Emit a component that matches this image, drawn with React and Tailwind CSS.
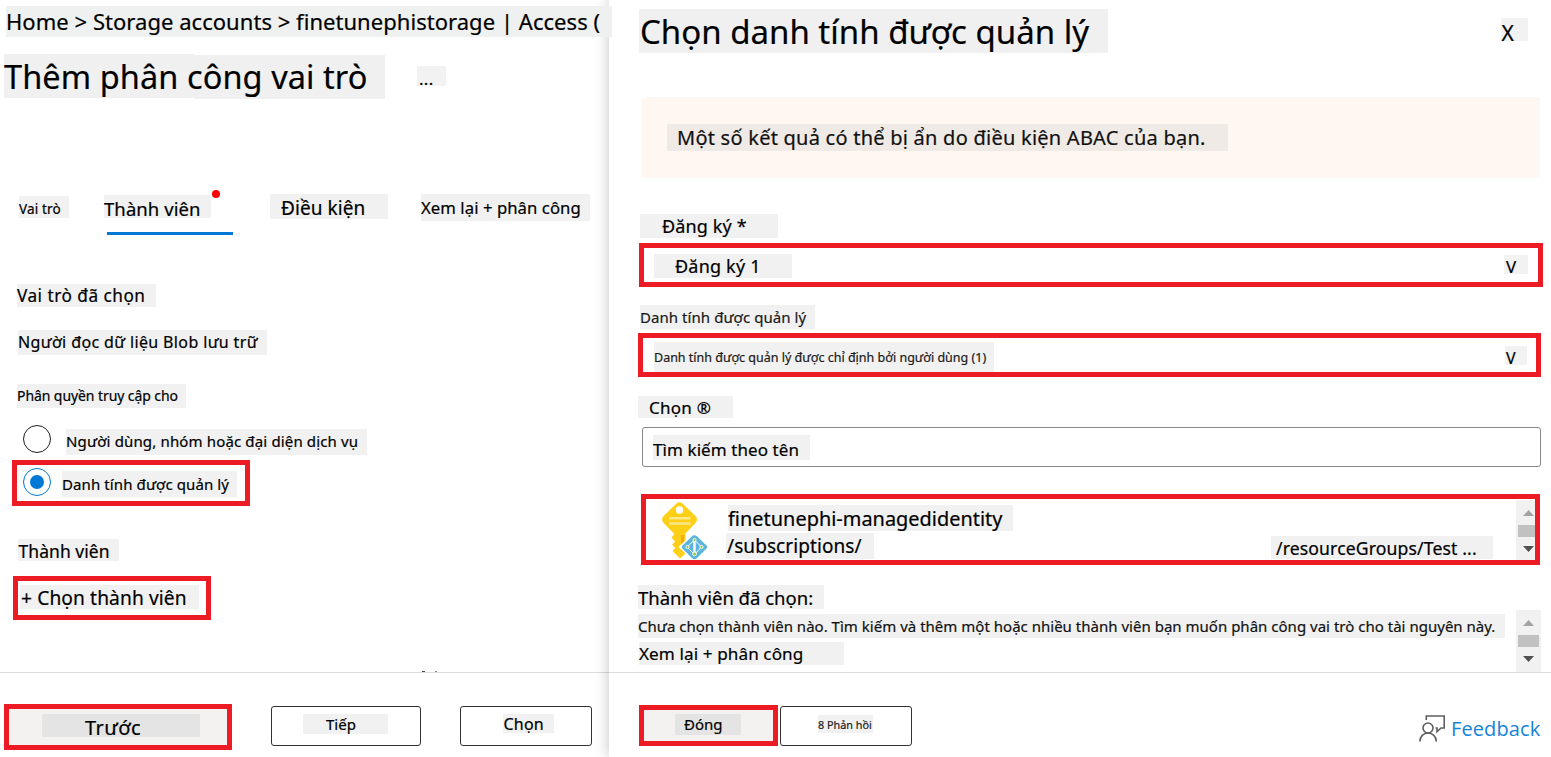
import React from "react";
import clsx from "clsx";

function Chip({ className, children }) {
  return <div className={clsx("shrink-0 whitespace-pre", className)}>{children}</div>;
}

function KeyIcon() {
  return (
    <svg className="ml-[15px] mt-[2px] h-[59px] w-[48px] shrink-0" viewBox="0 0 48 59">
      <path
        d="M15.500 2.500 Q18.500 0 21.500 2.500 L34.500 15 Q37.500 18.500 34.500 22 L24.500 32.500 V52.500 L19 57.500 L11.500 50 L14.100 47 L11.100 43.500 L14.100 40.500 L10.500 36.500 L13 33.500 V32.500 L2.500 22 Q-0.500 18.500 2.500 15 Z"
        fill="#fdd017"
      />
      <path d="M20 34 H23 V48 L20 51 Z" fill="#fba919" />
      <circle cx="18.500" cy="9" r="3.800" fill="#fff" />
      <path d="M8 17.200 H29.500 M8 22.500 H29.500" stroke="#fee68a" strokeWidth="2.400" />
      <path d="M33.500 31 L49 46 L33.500 61 L17.500 46 Z" fill="#fff" />
      <path
        d="M31 35.300 Q33.500 33 36 35.300 L45.500 44.400 Q47 46 45.500 47.600 L36 57 Q33.500 59.500 31 57 L21.500 47.600 Q20 46 21.500 44.400 Z"
        fill="#5bb4dc"
      />
      <path d="M33.500 39 L26 46 L33.500 53.500 L40.500 46 Z" fill="none" stroke="#fff" strokeWidth="1" />
      <path d="M33.500 39 V53.500" stroke="#fff" strokeWidth="2.400" />
      <g fill="#8cc63f" stroke="#fff" strokeWidth="0.900">
        <circle cx="33.500" cy="39" r="1.600" />
        <circle cx="26.500" cy="46" r="1.600" />
        <circle cx="40.500" cy="46" r="1.600" />
        <circle cx="33.500" cy="53" r="1.900" />
      </g>
    </svg>
  );
}

function FeedbackIcon() {
  return (
    <svg className="h-[28px] w-[28px] shrink-0" viewBox="0 0 28 28" fill="none" stroke="#5f5f5f" strokeWidth="1.600">
      <path d="M7.300 5 V1 H25.200 V13 H22 L18 16.600 V13 H16.500" />
      <circle cx="9" cy="13" r="5" />
      <path d="M0.900 26.500 C0.900 21.500 4.500 18 9 18 C13.500 18 17.300 21.500 17.300 26.500" />
    </svg>
  );
}

function Arrow({ up, className }) {
  return (
    <svg className={clsx("block h-[6px] w-[11px] shrink-0", className)} viewBox="0 0 11 6">
      <path d={up ? "M0 6 L5.500 0 L11 6 Z" : "M0 0 L5.500 6 L11 0 Z"} fill={up ? "#a3a3a3" : "#505050"} />
    </svg>
  );
}

function LeftPane() {
  return (
    <section className="flex h-[757px] w-[609px] shrink-0 flex-col">
      <div className="flex h-[672px] flex-col items-start overflow-visible">
        <Chip className="relative z-20 ml-[6px] mt-[6px] h-[31px] w-[606px] bg-[#eff1f0] text-[22px] leading-[31px] tracking-[0.04px]">
          Home &gt; Storage accounts &gt; finetunephistorage | Access (
        </Chip>
        <div className="mt-[17px] flex h-[45px]">
          <Chip className="ml-[4px] h-[44px] w-[190px] bg-[#f0f0f0] text-[32.5px] leading-[45px] tracking-[0.08px]">Thêm phân công vai trò</Chip>
          <span className="-z-10 mt-[1px] h-[44px] w-[191px] bg-[#f0f0f0]" />
          <Chip className="ml-[32px] mt-[12px] h-[20px] w-[29px] bg-[#f2f2f2] pl-[2px] text-[17px] leading-[25px] tracking-[0.3px]">...</Chip>
        </div>
        <div className="mt-[91px] flex h-[45px] items-start">
          <Chip className="ml-[19px] mt-[6px] h-[22px] w-[50px] bg-[#f1f1f1] text-[13.5px] leading-[26px] tracking-[0.15px]">Vai trò</Chip>
          <div className="ml-[35px] flex w-[130px] flex-col">
            <div className="flex">
              <Chip className="mt-[5px] h-[23px] w-[107px] bg-[#f1f1f1] text-[18.5px] leading-[27px] tracking-[0.08px]">Thành viên</Chip>
              <span className="ml-[1px] h-[8px] w-[8px] rounded-full bg-[#fb0007]" />
            </div>
            <span className="ml-[3px] mt-[14px] h-[3px] w-[126px] bg-[#0078d4]" />
          </div>
          <Chip className="ml-[36px] mt-[4px] h-[25px] w-[118px] bg-[#f1f1f1] pl-[11px] text-[19px] leading-[28px] tracking-[0.08px]">Điều kiện</Chip>
          <Chip className="ml-[33px] mt-[4px] h-[27px] w-[169px] bg-[#f1f1f1] text-[16.7px] leading-[27px] tracking-[0.06px]">Xem lại + phân công</Chip>
        </div>
        <Chip className="ml-[17px] mt-[49px] h-[23px] w-[139px] bg-[#f1f1f1] text-[17.2px] leading-[23px] tracking-[0.5px]">Vai trò đã chọn</Chip>
        <Chip className="ml-[18px] mt-[23px] h-[25px] w-[249px] bg-[#f1f1f1] text-[16px] leading-[24px] tracking-[0.37px]">Người đọc dữ liệu Blob lưu trữ</Chip>
        <Chip className="ml-[17px] mt-[29px] h-[24px] w-[169px] bg-[#f1f1f1] text-[14px] leading-[24px] tracking-[-0.08px]">Phân quyền truy cập cho</Chip>
        <div className="ml-[23px] mt-[17px] flex h-[30px]">
          <span className="h-[28px] w-[28px] rounded-full border border-[#1f1f1f] bg-white" />
          <Chip className="ml-[15px] mt-[4px] h-[26px] w-[301px] bg-[#f1f1f1] text-[15px] leading-[25px] tracking-[0.15px]">
            Người dùng, nhóm hoặc đại diện dịch vụ
          </Chip>
        </div>
        <div className="ml-[12px] mt-[5px] flex h-[46px] w-[238px] border-[5px] border-[#ed1c24] pl-[6px]">
          <span className="mt-[3px] flex h-[28px] w-[28px] items-center justify-center rounded-full border border-[#0078d4]">
            <span className="h-[14px] w-[14px] rounded-full bg-[#0078d4]" />
          </span>
          <Chip className="ml-[11px] mt-[6px] h-[26px] w-[175px] bg-[#f1f1f1] text-[15px] leading-[26px] tracking-[0.1px]">Danh tính được quản lý</Chip>
        </div>
        <Chip className="ml-[18px] mt-[33px] h-[22px] w-[101px] bg-[#f1f1f1] pl-[0.5px] text-[17.5px] leading-[25px] tracking-[0.05px]">Thành viên</Chip>
        <div className="ml-[13px] mt-[15px] flex h-[44px] w-[198px] border-[5px] border-[#ed1c24]">
          <Chip className="ml-[2px] mt-[4px] h-[24px] w-[179px] bg-[#f1f1f1] pl-[1px] text-[19.2px] leading-[26px] tracking-[0.1px]">+ Chọn thành viên</Chip>
        </div>
        <svg className="ml-[422px] mt-[51px] h-[1px] w-[16px]" viewBox="0 0 16 1">
          <path d="M0 0 H3 V1 H0 Z" fill="#444" />
          <path d="M13 0 H15 V1 H13 Z" fill="#888" />
        </svg>
      </div>
      <div className="flex h-[85px] items-start border-t border-[#dcdcdc]">
        <div className="ml-[4px] mt-[31px] flex h-[46px] w-[228px] border-[5px] border-[#ed1c24] bg-[#f3f2f1]">
          <Chip className="ml-[33px] mt-[5px] h-[23px] w-[158px] bg-[#e4e4e4] pl-[43px] text-[20px] leading-[28px] tracking-[0.45px]">Trước</Chip>
        </div>
        <div className="ml-[39px] mt-[33px] flex h-[40px] w-[150px] rounded-[3px] border border-[#323130] bg-white">
          <Chip className="ml-[31px] mt-[7px] h-[20px] w-[85px] bg-[#f1f1f1] pl-[23px] text-[15px] leading-[20px]">Tiếp</Chip>
        </div>
        <div className="ml-[39px] mt-[33px] flex h-[40px] w-[132px] rounded-[3px] border border-[#323130] bg-white">
          <Chip className="ml-[42px] mt-[7px] h-[19px] w-[51px] bg-[#f1f1f1] pl-[0.5px] text-[16px] leading-[20px] tracking-[0.2px]">Chọn</Chip>
        </div>
      </div>
    </section>
  );
}

function RightPane() {
  return (
    <section className="relative z-10 flex h-[757px] w-[942px] shrink-0 flex-col bg-white shadow-[0_0_14px_rgba(0,0,0,0.24)]">
      <div className="flex h-[672px] flex-col items-start">
        <div className="flex">
          <Chip className="ml-[30px] mt-[9px] h-[44px] w-[469px] bg-[#f0f0f0] pl-[1px] text-[33px] leading-[45px]">Chọn danh tính được quản lý</Chip>
          <Chip className="ml-[393px] mt-[18px] h-[23px] w-[27px] bg-[#f2f2f2] pl-[0.5px] text-[21px] leading-[30px]">X</Chip>
        </div>
        <div className="ml-[33px] mt-[44px] flex h-[81px] w-[898px] rounded-[3px] bg-[#fff7f1]">
          <Chip className="ml-[25px] mt-[27px] h-[27px] w-[561px] bg-[#efeae5] pl-[10px] text-[20px] leading-[28px] tracking-[0.24px] text-[#111]">
            Một số kết quả có thể bị ẩn do điều kiện ABAC của bạn.
          </Chip>
        </div>
        <Chip className="ml-[31px] mt-[36px] h-[24px] w-[138px] bg-[#f1f1f1] pl-[22px] text-[18px] leading-[24px] tracking-[0.15px]">Đăng ký *</Chip>
        <div className="ml-[30px] mt-[5px] flex h-[44px] w-[904px] border-[5px] border-[#ed1c24]">
          <Chip className="ml-[10px] mt-[6px] h-[24px] w-[138px] bg-[#f1f1f1] pl-[21px] text-[18px] leading-[24px] tracking-[0.2px]">Đăng ký 1</Chip>
          <Chip className="ml-[712px] mt-[7px] h-[19px] w-[24px] bg-[#f2f2f2] pl-[2px] text-[17px] leading-[24px]">V</Chip>
        </div>
        <Chip className="ml-[31px] mt-[18px] h-[24px] w-[175px] bg-[#f1f1f1] text-[15px] leading-[25px] tracking-[0.06px] text-[#1a1a1a]">Danh tính được quản lý</Chip>
        <div className="ml-[29px] mt-[4px] flex h-[44px] w-[903px] border-[5px] border-[#ed1c24]">
          <Chip className="ml-[11px] mt-[4px] h-[30px] w-[340px] bg-[#f1f1f1] text-[12.5px] leading-[31px] text-[#1a1a1a]">
            Danh tính được quản lý được chỉ định bởi người dùng (1)
          </Chip>
          <Chip className="ml-[511px] mt-[8px] h-[19px] w-[22px] bg-[#f2f2f2] pl-[1px] text-[16px] leading-[24px]">V</Chip>
        </div>
        <Chip className="ml-[29px] mt-[19px] h-[22px] w-[95px] bg-[#f1f1f1] pl-[11px] text-[17px] leading-[24px] tracking-[0.25px]">Chọn ®</Chip>
        <div className="ml-[33px] mt-[9px] flex h-[40px] w-[899px] rounded-[3px] border border-[#8a8886]">
          <Chip className="ml-[10px] mt-[7px] h-[25px] w-[157px] bg-[#f1f1f1] text-[17px] leading-[29px] tracking-[0.08px]">Tìm kiếm theo tên</Chip>
        </div>
        <div className="ml-[32px] mt-[27px] flex h-[71px] w-[899px] overflow-hidden border-[5px] border-[#ed1c24]">
          <KeyIcon />
          <div className="ml-[17px] flex w-[287px] flex-col">
            <Chip className="ml-[2px] mt-[6px] h-[26px] w-[285px] bg-[#f1f1f1] text-[19.9px] leading-[27px] tracking-[0.02px]">finetunephi-managedidentity</Chip>
            <Chip className="mt-[2px] h-[26px] w-[148px] bg-[#f1f1f1] pl-[1px] text-[19px] leading-[27px] tracking-[0.08px]">/subscriptions/</Chip>
          </div>
          <Chip className="ml-[258px] mt-[37px] h-[23px] w-[222px] bg-[#f1f1f1] pl-[5px] text-[17.6px] leading-[24px] tracking-[0.13px]">/resourceGroups/Test ...</Chip>
          <div className="ml-[23px] mt-[1px] flex h-[60px] w-[19px] flex-col overflow-hidden bg-[#f1f1f1]">
            <Arrow up className="ml-[7px] mt-[10px]" />
            <span className="ml-[2px] mt-[9px] h-[12px] w-[21px] shrink-0 bg-[#c1c1c1]" />
            <Arrow className="ml-[7px] mt-[9px]" />
          </div>
        </div>
        <div className="mt-[20px] flex">
          <div className="ml-[29px] flex w-[867px] flex-col">
            <Chip className="h-[24px] w-[186px] bg-[#f1f1f1] text-[18.5px] leading-[26px]">Thành viên đã chọn:</Chip>
            <Chip className="mt-[5px] h-[24px] w-[867px] bg-[#f1f1f1] text-[15px] leading-[24px] tracking-[0.015px] text-[#111]">
              Chưa chọn thành viên nào. Tìm kiếm và thêm một hoặc nhiều thành viên bạn muốn phân công vai trò cho tài nguyên này.
            </Chip>
            <Chip className="ml-[1px] mt-[4px] h-[23px] w-[205px] bg-[#f1f1f1] text-[17.1px] leading-[23px] tracking-[0.1px]">Xem lại + phân công</Chip>
          </div>
          <div className="ml-[11px] mt-[25px] flex h-[62px] w-[25px] flex-col bg-[#f1f1f1]">
            <Arrow up className="ml-[7px] mt-[10px]" />
            <span className="ml-[2px] mt-[9px] h-[12px] w-[21px] bg-[#c1c1c1]" />
            <Arrow className="ml-[7px] mt-[9px]" />
          </div>
        </div>
      </div>
      <div className="flex h-[85px] items-start border-t border-[#dcdcdc]">
        <div className="ml-[30px] mt-[32px] flex h-[41px] w-[139px] border-[5px] border-[#ed1c24] bg-[#f3f2f1]">
          <Chip className="ml-[31px] mt-[4px] h-[21px] w-[66px] bg-[#e4e4e4] pl-[9px] text-[15px] leading-[20px]">Đóng</Chip>
        </div>
        <div className="ml-[2px] mt-[33px] flex h-[40px] w-[132px] rounded-[3px] border border-[#323130] bg-white">
          <Chip className="ml-[37px] mt-[8px] h-[18px] w-[55px] bg-[#f1f1f1] text-[10.8px] leading-[20px] text-[#222]">8 Phản hồi</Chip>
        </div>
        <div className="ml-[507px] mt-[42px] flex text-[#1683d8] [-webkit-text-stroke:0px]">
          <FeedbackIcon />
          <Chip className="ml-[4px] font-['Open_Sans',sans-serif] text-[20px] leading-[28px] tracking-[0.1px]">Feedback</Chip>
        </div>
      </div>
    </section>
  );
}

export default function App() {
  return (
    <main className="isolate flex h-[757px] w-[1551px] overflow-hidden bg-white font-['Noto_Sans',sans-serif] text-black [-webkit-text-stroke:0.2px]">
      <LeftPane />
      <RightPane />
    </main>
  );
}
